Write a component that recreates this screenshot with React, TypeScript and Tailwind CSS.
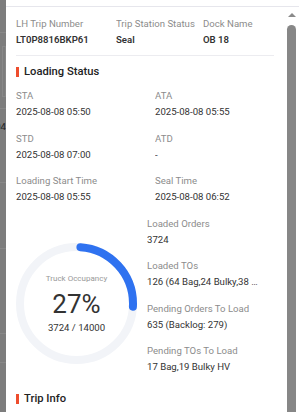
import React from "react";

const font = { fontFamily: "Roboto, 'Noto Sans', Arial, sans-serif" };

function Field({ label, value, strong }: { label: string; value: string; strong?: boolean }) {
  return (
    <div className="min-w-0">
      <div className="text-[9.6px] leading-[16px] text-[#8c8c8c] truncate">{label}</div>
      <div
        className={`text-[9.6px] leading-[16px] text-[#333] truncate ${strong ? "font-semibold" : ""}`}
      >
        {value}
      </div>
    </div>
  );
}

function SectionTitle({ title }: { title: string }) {
  return (
    <div className="flex items-center gap-[5px] h-[16px]">
      <span className="w-[3px] h-[10px] bg-[#ee4d2d]" />
      <span className="text-[11.2px] leading-[16px] font-medium text-[#222]">{title}</span>
    </div>
  );
}

function Donut() {
  const r = 56.5;
  const c = 2 * Math.PI * r;
  return (
    <div className="relative w-[121px] h-[121px]">
      <svg width="121" height="121" viewBox="0 0 121 121" className="-rotate-90">
        <circle cx="60.5" cy="60.5" r={r} fill="none" stroke="#f2f4f8" strokeWidth="8" />
        <circle
          cx="60.5"
          cy="60.5"
          r={r}
          fill="none"
          stroke="#2f72f0"
          strokeWidth="8"
          strokeLinecap="round"
          strokeDasharray={`${c * 0.27 - 8} ${c}`}
          strokeDashoffset={-4}
        />
      </svg>
      <div className="absolute inset-0 flex flex-col items-center pt-[31px]">
        <div className="text-[8px] leading-[10px] text-[#999]">Truck Occupancy</div>
        <div className="mt-[5px] text-[26px] leading-[30px] text-[#333]">27%</div>
        <div className="mt-[3px] text-[9.6px] leading-[12px] text-[#333]">3724 / 14000</div>
      </div>
    </div>
  );
}

export default function App() {
  return (
    <div className="relative flex w-[299px] h-[412px] overflow-hidden bg-white" style={font}>
      {/* dimmed page behind the drawer */}
      <div className="relative w-[6px] shrink-0 bg-[#7d7d7d] overflow-hidden">
        <div className="absolute left-0 right-0 top-[32px] h-px bg-[#888]" />
        <div className="absolute left-[2px] right-0 top-[46px] h-[51px] border border-[#888]" />
        <div className="absolute left-0 right-0 top-[108px] h-px bg-[#888]" />
        <div className="absolute right-0 top-[121px] text-[9.6px] leading-[12px] text-[#222] whitespace-nowrap">
          04
        </div>
        <div className="absolute left-0 right-0 top-[182px] h-px bg-[#888]" />
        <div className="absolute left-0 right-0 top-[248px] h-px bg-[#888]" />
        <div className="absolute left-0 right-0 top-[333px] h-px bg-[#888]" />
        <div className="absolute left-0 right-0 top-[362px] h-px bg-[#888]" />
      </div>

      <div className="flex flex-1 flex-col min-w-0">
        <div className="h-[7px] shrink-0 border-b border-[#e6e6ec]" />
        <div className="flex flex-1 min-h-0">
          <div className="flex-1 min-w-0 pl-[10px] pr-[10px] pt-[9px]">
            <div className="grid grid-cols-[100px_87px_1fr] pb-[7px] border-b border-[#ececf0]">
              <Field label="LH Trip Number" value="LT0P8816BKP61" strong />
              <Field label="Trip Station Status" value="Seal" strong />
              <Field label="Dock Name" value="OB 18" strong />
            </div>

            <div className="mt-[8px]">
              <SectionTitle title="Loading Status" />
            </div>

            <div className="mt-[8px] grid grid-cols-[139px_1fr] gap-y-[10.5px]">
              <Field label="STA" value="2025-08-08 05:50" />
              <Field label="ATA" value="2025-08-08 05:55" />
              <Field label="STD" value="2025-08-08 07:00" />
              <Field label="ATD" value="-" />
              <Field label="Loading Start Time" value="2025-08-08 05:55" />
              <Field label="Seal Time" value="2025-08-08 06:52" />
            </div>

            <div className="mt-[10.5px] flex gap-[10px]">
              <div className="mt-[27px] shrink-0">
                <Donut />
              </div>
              <div className="w-[111px] flex flex-col gap-y-[10.5px]">
                <Field label="Loaded Orders" value="3724" />
                <Field label="Loaded TOs" value="126 (64 Bag,24 Bulky,38 Bulky HV)" />
                <Field label="Pending Orders To Load" value="635 (Backlog: 279)" />
                <Field label="Pending TOs To Load" value="17 Bag,19 Bulky HV" />
              </div>
            </div>

            <div className="mt-[15.5px]">
              <SectionTitle title="Trip Info" />
            </div>
          </div>

          {/* scrollbar */}
          <div className="w-[15px] shrink-0 flex flex-col items-center">
            <div className="mt-[6px] w-0 h-0 border-l-[4px] border-r-[4px] border-b-[4px] border-l-transparent border-r-transparent border-b-[#8a8a8a]" />
            <div className="mt-[8px] w-[9px] flex-1 rounded-t-full bg-[#878787]" />
          </div>
        </div>
      </div>
    </div>
  );
}
